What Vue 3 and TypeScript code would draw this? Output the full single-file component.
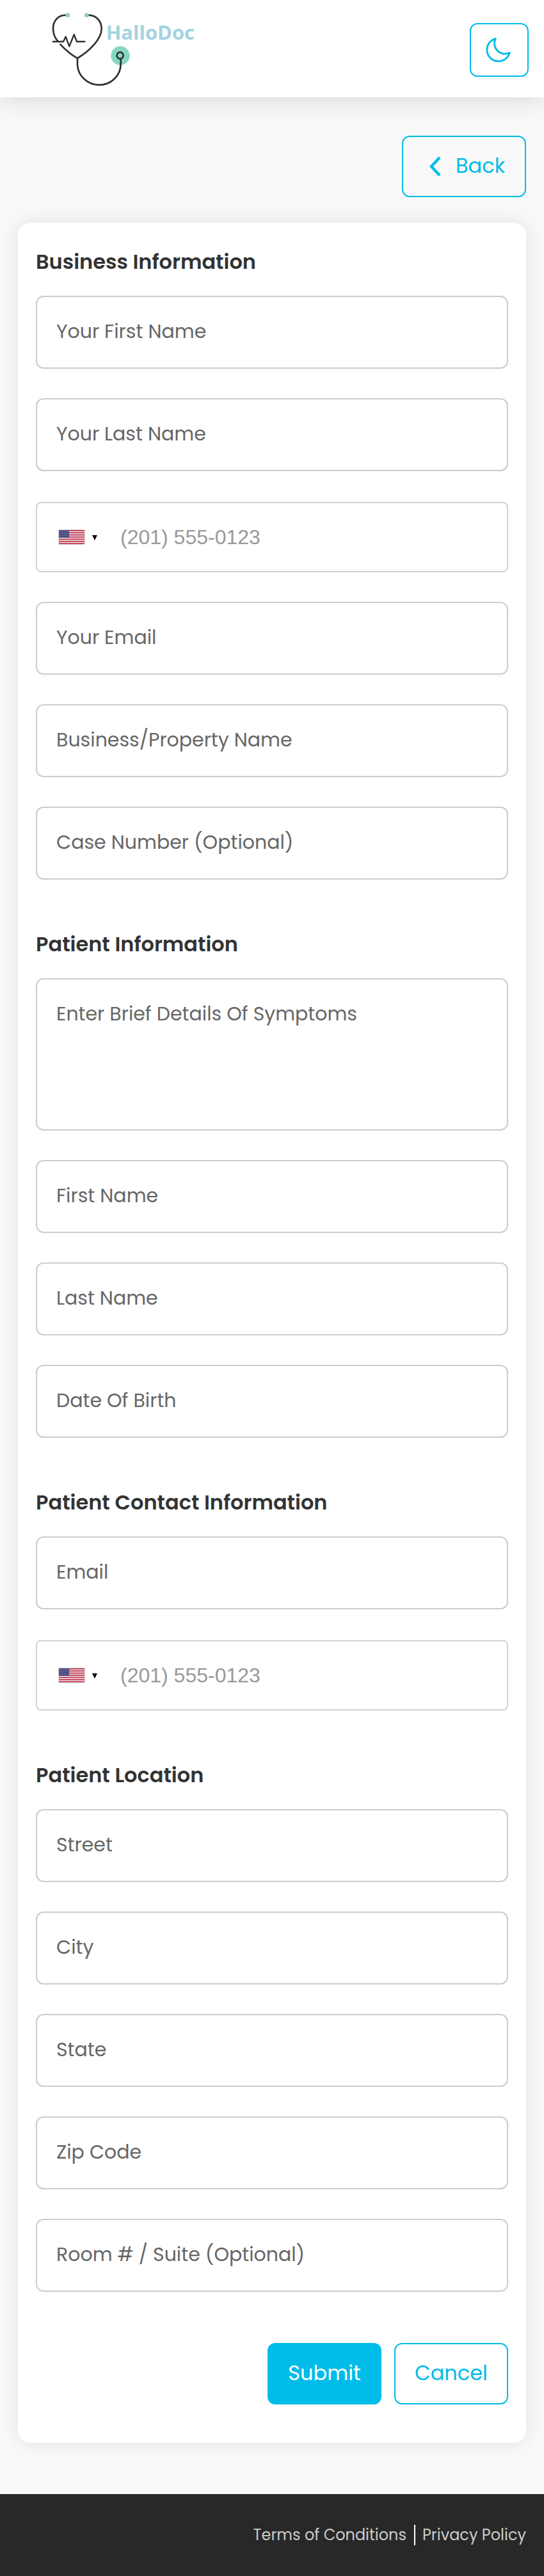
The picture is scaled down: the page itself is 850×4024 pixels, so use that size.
<script setup lang="ts">
interface Field { kind: 'text' | 'area' | 'phone'; label: string }
interface Section { title: string; fields: Field[] }

const text = (label: string): Field => ({ kind: 'text', label })
const phone = (): Field => ({ kind: 'phone', label: '(201) 555-0123' })

const sections: Section[] = [
  {
    title: 'Business Information',
    fields: [
      text('Your First Name'),
      text('Your Last Name'),
      phone(),
      text('Your Email'),
      text('Business/Property Name'),
      text('Case Number (Optional)'),
    ],
  },
  {
    title: 'Patient Information',
    fields: [
      { kind: 'area', label: 'Enter Brief Details Of Symptoms' },
      text('First Name'),
      text('Last Name'),
      text('Date Of Birth'),
    ],
  },
  {
    title: 'Patient Contact Information',
    fields: [text('Email'), phone()],
  },
  {
    title: 'Patient Location',
    fields: [
      text('Street'),
      text('City'),
      text('State'),
      text('Zip Code'),
      text('Room # / Suite (Optional)'),
    ],
  },
]

const stripes = [0, 2, 4, 6, 8, 10, 12]
</script>

<template>
  <div class="page">
    <header class="header">
      <svg class="logo" viewBox="0 0 780 456" role="img" aria-label="HalloDoc">
        <circle cx="384" cy="261" r="44" fill="#86d6c1" />
        <g fill="none" stroke="#303030" stroke-width="8" stroke-linecap="round" stroke-linejoin="round">
          <path d="M128 71C94 71 69 96 69 133C69 154 76 176 90 192" />
          <path d="M236 71C270 72 296 97 296 135C296 184 239 239 183 273" />
          <path d="M103 208C128 235 155 257 183 273V303C185 355 230 398 284 398C340 398 386 355 386 299V276" />
          <path d="M68 195H117L128 172L145 217L167 162L180 195H217" stroke-width="7" />
          <circle cx="383" cy="260" r="15" />
        </g>
        <circle cx="137" cy="71" r="10" fill="#8bd1be" />
        <circle cx="226" cy="71" r="10" fill="#8bd1be" />
        <text class="brand" x="317" y="185" textLength="415" lengthAdjust="spacingAndGlyphs">HalloDoc</text>
      </svg>
      <button class="btn theme" aria-label="Dark mode">
        <svg class="moon" viewBox="478 174 120 120">
          <path d="M524 181A54 54 0 1 0 590 247A49 49 0 0 1 524 181Z" />
        </svg>
      </button>
    </header>

    <main class="main">
      <button class="btn back">
        <svg class="chevron" viewBox="0 0 20 32"><path d="M17 2L4 16L17 30" /></svg>
        <span>Back</span>
      </button>

      <form class="card" @submit.prevent>
        <section v-for="s in sections" :key="s.title" class="section">
          <h2 class="title">{{ s.title }}</h2>
          <div class="fields">
            <div v-for="f in s.fields" :key="f.label" class="field" :class="f.kind">
              <template v-if="f.kind === 'phone'">
                <svg class="flag" viewBox="0 0 40 22">
                  <rect width="40" height="22" fill="#f0e3e5" />
                  <rect v-for="n in stripes" :key="n" :y="(n * 22) / 13" width="40" height="1.7" fill="#bf3049" />
                  <rect width="16" height="12" fill="#514f83" />
                  <path d="M2 2.5H15M1 5.5H14M2 8.5H15" stroke="#8583a8" stroke-dasharray="1 2" />
                </svg>
                <i class="caret" />
              </template>
              <span>{{ f.label }}</span>
            </div>
          </div>
        </section>
        <div class="actions">
          <button class="btn action primary">Submit</button>
          <button class="btn action">Cancel</button>
        </div>
      </form>
    </main>

    <footer class="footer">
      <span>Terms of Conditions</span>
      <i class="divider" />
      <span>Privacy Policy</span>
    </footer>
  </div>
</template>

<style>
body {
  background: #f9f9f9;
}
</style>

<style scoped>
.page {
  width: 850px;
  height: 4024px;
  display: flex;
  flex-direction: column;
  overflow: hidden;
  background: #f9f9f9;
  font-family: Poppins, Inter, "Open Sans", sans-serif;
}
.page * {
  box-sizing: border-box;
}
.page span {
  white-space: nowrap;
}
.header {
  height: 152px;
  flex: none;
  display: flex;
  justify-content: space-between;
  align-items: flex-start;
  padding: 0 24px 0 60px;
  background: #fff;
  box-shadow: 0 0 40px rgba(0, 0, 0, 0.17);
}
.logo {
  width: 260px;
  height: 152px;
}
.brand {
  font: 700 93px "Open Sans", sans-serif;
  fill: #a3d3e0;
}
.btn {
  display: flex;
  align-items: center;
  margin: 0;
  padding: 0;
  border: 2px solid #00bce9;
  border-radius: 12px;
  background: transparent;
  color: #00bce9;
  font: 400 32px/45px Poppins, Inter, "Open Sans", sans-serif;
}
.theme {
  width: 92px;
  height: 84px;
  margin-top: 36px;
  padding: 0 0 0 23px;
  align-items: flex-start;
}
.moon {
  width: 40px;
  height: 40px;
  margin-top: 20px;
  fill: none;
  stroke: #00bce9;
  stroke-width: 8.5;
  stroke-linejoin: round;
}
.main {
  flex: 1;
  padding: 60px 28px 0;
}
.back {
  width: 194px;
  height: 96px;
  margin-left: auto;
  padding: 0 0 3px 40px;
}
.chevron {
  width: 20px;
  height: 32px;
  margin: 3px 22px 0 0;
  fill: none;
  stroke: #00bce9;
  stroke-width: 4.4;
}
.card {
  height: 3468px;
  margin-top: 40px;
  padding: 38px 28px 0;
  border-radius: 20px;
  background: #fff;
  box-shadow: 0 0 32px rgba(0, 0, 0, 0.095);
}
.section + .section {
  margin-top: 78px;
}
.title {
  height: 76px;
  margin: 0;
  color: #333;
  font-size: 32px;
  font-weight: 600;
  line-height: 45px;
}
.fields {
  display: flex;
  flex-direction: column;
  gap: 46px;
}
.field {
  display: flex;
  align-items: flex-start;
  height: 114px;
  padding: 33px 30px 0;
  border: 2px solid #ccc;
  border-radius: 12px;
  color: #666;
  font-size: 30px;
  line-height: 41px;
}
.area {
  height: 238px;
}
.phone {
  height: 110px;
  margin-top: 2px;
  padding-left: 34px;
  border-color: #ced4da;
  border-radius: 8px;
  color: #999;
  font-family: "Liberation Sans", Arial, sans-serif;
  font-size: 32px;
  line-height: 40px;
}
.flag {
  width: 40px;
  height: 22px;
  margin-top: 9px;
  box-shadow: 0 0 2px #999;
}
.caret {
  margin: 17px 36px 0 12px;
  border: 4px solid transparent;
  border-top: 8px solid #000;
  border-bottom: 0;
}
.actions {
  display: flex;
  justify-content: flex-end;
  gap: 20px;
  margin-top: 80px;
}
.action {
  width: 178px;
  height: 96px;
  justify-content: center;
  padding-bottom: 3px;
}
.primary {
  background: #00bce9;
  color: #fff;
}
.footer {
  height: 128px;
  flex: none;
  display: flex;
  justify-content: flex-end;
  align-items: center;
  padding: 0 28px 1px 0;
  background: #282828;
  color: #ccc;
  font-size: 24px;
  line-height: 33px;
}
.divider {
  width: 2px;
  height: 32px;
  margin: 1px 11px 0 12px;
  background: #fff;
}
</style>
